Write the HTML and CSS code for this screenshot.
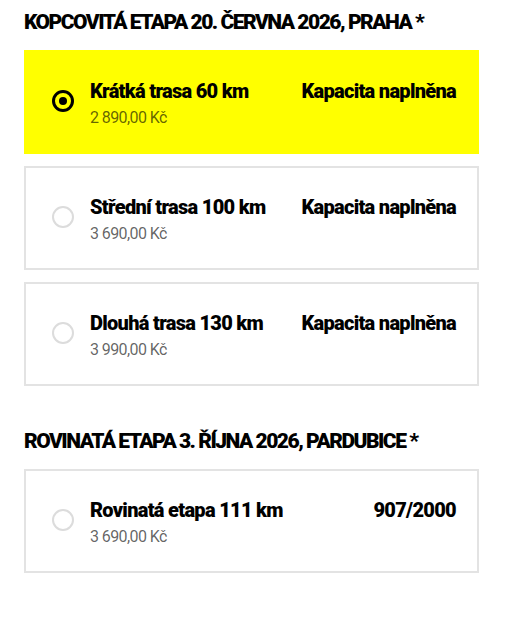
FILE: index.html
```html
<!DOCTYPE html>
<html lang="cs">
<head>
    <meta charset="UTF-8">
    <meta name="viewport" content="width=device-width, initial-scale=1.0">
    <title>Výběr trasy</title>
    <link rel="stylesheet" href="styles.css">
</head>
<body>
    <!-- Kopcovitá etapa -->
    <section class="stage">
        <h2 class="stage-title">Kopcovitá etapa 20. června 2026, Praha *</h2>
        <label class="option selected">
            <span class="radio"></span>
            <span class="option-body">
                <span class="option-name">Krátká trasa 60 km</span>
                <span class="option-price">2 890,00 Kč</span>
            </span>
            <span class="option-status">Kapacita naplněna</span>
        </label>
        <label class="option">
            <span class="radio"></span>
            <span class="option-body">
                <span class="option-name">Střední trasa 100 km</span>
                <span class="option-price">3 690,00 Kč</span>
            </span>
            <span class="option-status">Kapacita naplněna</span>
        </label>
        <label class="option">
            <span class="radio"></span>
            <span class="option-body">
                <span class="option-name">Dlouhá trasa 130 km</span>
                <span class="option-price">3 990,00 Kč</span>
            </span>
            <span class="option-status">Kapacita naplněna</span>
        </label>
    </section>
    <!-- Rovinatá etapa -->
    <section class="stage">
        <h2 class="stage-title">Rovinatá etapa 3. října 2026, Pardubice *</h2>
        <label class="option">
            <span class="radio"></span>
            <span class="option-body">
                <span class="option-name">Rovinatá etapa 111 km</span>
                <span class="option-price">3 690,00 Kč</span>
            </span>
            <span class="option-status">907/2000</span>
        </label>
    </section>
</body>
</html>
```

FILE: styles.css
```css
body {
    font-family: 'Roboto', sans-serif;
    margin: 0;
    padding: 10px 27px 0 24px;
    background-color: #ffffff;
    color: #000;
}
.stage {
    display: flex;
    flex-direction: column;
    gap: 12px;
    margin-bottom: 43px;
}
.stage-title {
    font-size: 21px;
    font-weight: 900;
    text-transform: uppercase;
    letter-spacing: -1.5px;
    white-space: nowrap;
    margin: 0 0 4px;
    line-height: 24px;
}
.option {
    display: flex;
    align-items: flex-start;
    height: 104px;
    box-sizing: border-box;
    padding: 27px 21px 0 26px;
    border: 2px solid #e3e3e3;
    background: #fff;
    cursor: pointer;
}
.option.selected {
    background: #ffff00;
    border-color: #ffff00;
}
.radio {
    flex: none;
    width: 22px;
    height: 22px;
    box-sizing: border-box;
    border: 2px solid #dcdcdc;
    border-radius: 50%;
    margin-top: 11px;
    position: relative;
}
.option.selected .radio {
    border: 3px solid #000;
}
.option.selected .radio::after {
    content: '';
    position: absolute;
    top: 4px;
    left: 4px;
    width: 8px;
    height: 8px;
    border-radius: 50%;
    background: #000;
}
.option-body {
    flex: 1;
    display: flex;
    flex-direction: column;
    margin-left: 16px;
}
.option-name {
    font-size: 20px;
    font-weight: 900;
    letter-spacing: -0.7px;
    line-height: 24px;
    white-space: nowrap;
}
.option-price {
    font-size: 16px;
    letter-spacing: -0.6px;
    line-height: 22px;
    margin-top: 4px;
    color: rgba(0, 0, 0, 0.62);
}
.option-status {
    font-size: 20px;
    font-weight: 900;
    letter-spacing: -0.7px;
    line-height: 24px;
    white-space: nowrap;
}
```
